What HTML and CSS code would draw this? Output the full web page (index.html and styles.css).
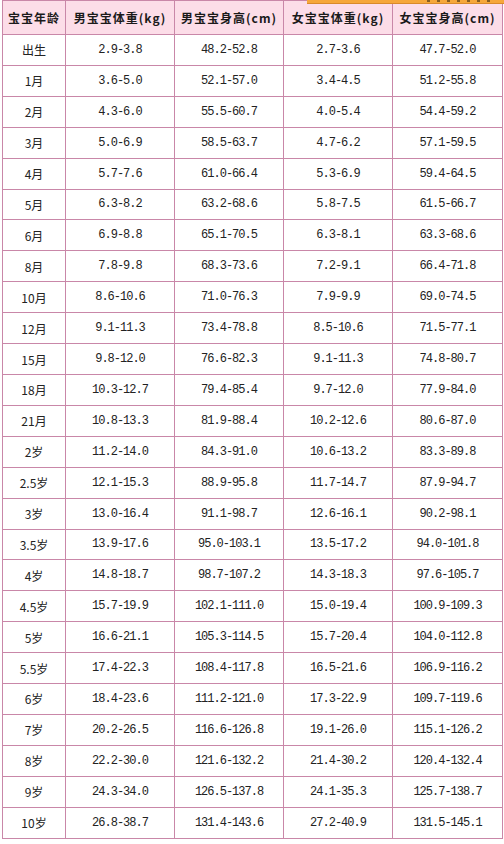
FILE: index.html
```html
<!DOCTYPE html>
<html lang="zh-CN">
<head>
<meta charset="utf-8">
<title>宝宝身高体重标准表</title>
<link rel="stylesheet" href="styles.css">
</head>
<body>
<div class="banner"><div class="banner-dots"></div></div>
<table class="chart">
  <colgroup>
    <col class="c1"><col class="c2"><col class="c3"><col class="c4"><col class="c5">
  </colgroup>
  <thead>
    <tr><th>宝宝年龄</th><th>男宝宝体重(kg)</th><th>男宝宝身高(cm)</th><th>女宝宝体重(kg)</th><th>女宝宝身高(cm)</th></tr>
  </thead>
  <tbody>
    <tr><td class="age">出生</td><td>2.9-3.8</td><td>48.2-52.8</td><td>2.7-3.6</td><td>47.7-52.0</td></tr>
    <tr><td class="age">1月</td><td>3.6-5.0</td><td>52.1-57.0</td><td>3.4-4.5</td><td>51.2-55.8</td></tr>
    <tr><td class="age">2月</td><td>4.3-6.0</td><td>55.5-60.7</td><td>4.0-5.4</td><td>54.4-59.2</td></tr>
    <tr><td class="age">3月</td><td>5.0-6.9</td><td>58.5-63.7</td><td>4.7-6.2</td><td>57.1-59.5</td></tr>
    <tr><td class="age">4月</td><td>5.7-7.6</td><td>61.0-66.4</td><td>5.3-6.9</td><td>59.4-64.5</td></tr>
    <tr><td class="age">5月</td><td>6.3-8.2</td><td>63.2-68.6</td><td>5.8-7.5</td><td>61.5-66.7</td></tr>
    <tr><td class="age">6月</td><td>6.9-8.8</td><td>65.1-70.5</td><td>6.3-8.1</td><td>63.3-68.6</td></tr>
    <tr><td class="age">8月</td><td>7.8-9.8</td><td>68.3-73.6</td><td>7.2-9.1</td><td>66.4-71.8</td></tr>
    <tr><td class="age">10月</td><td>8.6-10.6</td><td>71.0-76.3</td><td>7.9-9.9</td><td>69.0-74.5</td></tr>
    <tr><td class="age">12月</td><td>9.1-11.3</td><td>73.4-78.8</td><td>8.5-10.6</td><td>71.5-77.1</td></tr>
    <tr><td class="age">15月</td><td>9.8-12.0</td><td>76.6-82.3</td><td>9.1-11.3</td><td>74.8-80.7</td></tr>
    <tr><td class="age">18月</td><td>10.3-12.7</td><td>79.4-85.4</td><td>9.7-12.0</td><td>77.9-84.0</td></tr>
    <tr><td class="age">21月</td><td>10.8-13.3</td><td>81.9-88.4</td><td>10.2-12.6</td><td>80.6-87.0</td></tr>
    <tr><td class="age">2岁</td><td>11.2-14.0</td><td>84.3-91.0</td><td>10.6-13.2</td><td>83.3-89.8</td></tr>
    <tr><td class="age">2.5岁</td><td>12.1-15.3</td><td>88.9-95.8</td><td>11.7-14.7</td><td>87.9-94.7</td></tr>
    <tr><td class="age">3岁</td><td>13.0-16.4</td><td>91.1-98.7</td><td>12.6-16.1</td><td>90.2-98.1</td></tr>
    <tr><td class="age">3.5岁</td><td>13.9-17.6</td><td>95.0-103.1</td><td>13.5-17.2</td><td>94.0-101.8</td></tr>
    <tr><td class="age">4岁</td><td>14.8-18.7</td><td>98.7-107.2</td><td>14.3-18.3</td><td>97.6-105.7</td></tr>
    <tr><td class="age">4.5岁</td><td>15.7-19.9</td><td>102.1-111.0</td><td>15.0-19.4</td><td>100.9-109.3</td></tr>
    <tr><td class="age">5岁</td><td>16.6-21.1</td><td>105.3-114.5</td><td>15.7-20.4</td><td>104.0-112.8</td></tr>
    <tr><td class="age">5.5岁</td><td>17.4-22.3</td><td>108.4-117.8</td><td>16.5-21.6</td><td>106.9-116.2</td></tr>
    <tr><td class="age">6岁</td><td>18.4-23.6</td><td>111.2-121.0</td><td>17.3-22.9</td><td>109.7-119.6</td></tr>
    <tr><td class="age">7岁</td><td>20.2-26.5</td><td>116.6-126.8</td><td>19.1-26.0</td><td>115.1-126.2</td></tr>
    <tr><td class="age">8岁</td><td>22.2-30.0</td><td>121.6-132.2</td><td>21.4-30.2</td><td>120.4-132.4</td></tr>
    <tr><td class="age">9岁</td><td>24.3-34.0</td><td>126.5-137.8</td><td>24.1-35.3</td><td>125.7-138.7</td></tr>
    <tr><td class="age">10岁</td><td>26.8-38.7</td><td>131.4-143.6</td><td>27.2-40.9</td><td>131.5-145.1</td></tr>
  </tbody>
</table>
</body>
</html>
```

FILE: styles.css
```css
html, body {
  margin: 0;
  padding: 0;
  background: #ffffff;
}

body {
  position: relative;
  padding-left: 2px;
  font-family: "Liberation Mono", "Noto Sans CJK SC", monospace;
  color: #111111;
}

.banner {
  position: absolute;
  top: 0;
  left: 307px;
  width: 197px;
  height: 3px;
  background: #f6a73a;
  border-bottom: 1px solid #d98a2a;
  overflow: hidden;
  z-index: 2;
}

.banner-dots {
  position: absolute;
  left: 120px;
  top: 0;
  width: 70px;
  height: 2px;
  background: repeating-linear-gradient(90deg, #6a4a1a 0 3px, transparent 3px 10px);
  opacity: 0.8;
}

.chart {
  border-collapse: collapse;
  table-layout: fixed;
  width: 501px;
  border: 1px solid #c987a8;
}

.c1 { width: 63px; }
.c2 { width: 109px; }
.c3 { width: 109px; }
.c4 { width: 109px; }
.c5 { width: 110px; }

.chart th,
.chart td {
  border: 1px solid #c987a8;
  padding: 0;
  text-align: center;
  vertical-align: middle;
  white-space: nowrap;
}

.chart th {
  height: 33px;
  background: #fcdde8;
  font-family: "Noto Sans CJK SC", sans-serif;
  font-size: 12px;
  font-weight: bold;
  letter-spacing: 1px;
  color: #1a1a1a;
}

.chart td {
  height: 29.92px;
  font-size: 12px;
  letter-spacing: -1px;
  color: #222222;
}

.chart td.age {
  font-family: "Noto Sans CJK SC", sans-serif;
  font-size: 12px;
  letter-spacing: 0;
}
```
